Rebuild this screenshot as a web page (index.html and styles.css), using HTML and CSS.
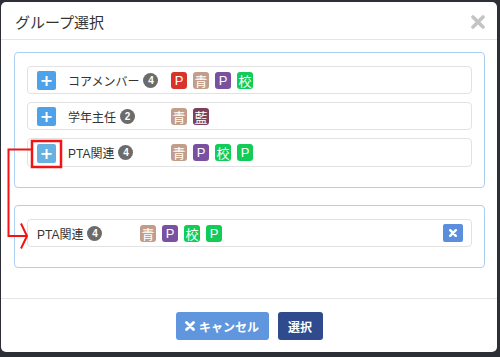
FILE: index.html
```html
<!DOCTYPE html>
<html lang="ja">
<head>
    <meta charset="UTF-8">
    <title>グループ選択</title>
    <link rel="stylesheet" href="styles.css">
</head>
<body>
    <div class="modal">
        <div class="modal-header">
            <h4 class="modal-title">グループ選択</h4>
            <span class="close">
                <svg width="14" height="14" viewBox="0 0 14 14"><path d="M2 2 L12 12 M12 2 L2 12" stroke="#c4c4c4" stroke-width="3.6" stroke-linecap="round"/></svg>
            </span>
        </div>

        <div class="modal-body">
            <!-- candidate groups -->
            <div class="panel">
                <div class="group-row">
                    <button class="btn-add">+</button>
                    <div class="group-name">コアメンバー<span class="badge">4</span></div>
                    <div class="tags">
                        <span class="tag tag-red">P</span>
                        <span class="tag tag-tan">青</span>
                        <span class="tag tag-purple">P</span>
                        <span class="tag tag-green">校</span>
                    </div>
                </div>
                <div class="group-row">
                    <button class="btn-add">+</button>
                    <div class="group-name">学年主任<span class="badge">2</span></div>
                    <div class="tags">
                        <span class="tag tag-tan">青</span>
                        <span class="tag tag-maroon">藍</span>
                    </div>
                </div>
                <div class="group-row">
                    <button class="btn-add hover">+</button>
                    <div class="group-name">PTA関連<span class="badge">4</span></div>
                    <div class="tags">
                        <span class="tag tag-tan">青</span>
                        <span class="tag tag-purple">P</span>
                        <span class="tag tag-green">校</span>
                        <span class="tag tag-green">P</span>
                    </div>
                </div>
            </div>

            <!-- selected groups -->
            <div class="panel">
                <div class="group-row selected">
                    <div class="group-name">PTA関連<span class="badge">4</span></div>
                    <div class="tags">
                        <span class="tag tag-tan">青</span>
                        <span class="tag tag-purple">P</span>
                        <span class="tag tag-green">校</span>
                        <span class="tag tag-green">P</span>
                    </div>
                    <button class="btn-remove">
                        <svg width="8" height="8" viewBox="0 0 8 8"><path d="M1.2 1.2 L6.8 6.8 M6.8 1.2 L1.2 6.8" stroke="#fff" stroke-width="2.4" stroke-linecap="round"/></svg>
                    </button>
                </div>
            </div>
        </div>

        <div class="modal-footer">
            <button class="btn btn-cancel">
                <svg width="10" height="10" viewBox="0 0 10 10"><path d="M1.5 1.5 L8.5 8.5 M8.5 1.5 L1.5 8.5" stroke="#fff" stroke-width="2.8" stroke-linecap="round"/></svg>
                キャンセル
            </button>
            <button class="btn btn-select">選択</button>
        </div>
    </div>

    <!-- annotation arrow -->
    <svg class="annotation" width="500" height="357" viewBox="0 0 500 357">
        <rect x="32" y="141" width="29" height="26" fill="none" stroke="#f21414" stroke-width="2.5"/>
        <path d="M31 149.5 H8.5 V236 H26" fill="none" stroke="#f21414" stroke-width="2"/>
        <path d="M21 223.5 L27 236 L21 248.5" fill="none" stroke="#f21414" stroke-width="2"/>
    </svg>
</body>
</html>
```

FILE: styles.css
```css
* {
    margin: 0;
    padding: 0;
    box-sizing: border-box;
}

body {
    background-color: #2c2f36;
    font-family: 'Liberation Sans', 'Noto Sans CJK JP', sans-serif;
    color: #333;
    width: 500px;
    height: 357px;
    overflow: hidden;
    position: relative;
}

.modal {
    margin: 2px 0 0 1px;
    width: 496px;
    height: 350px;
    background-color: #fff;
    border-radius: 5px;
    display: flex;
    flex-direction: column;
}

.modal-header {
    height: 38px;
    padding: 0 13px 0 14px;
    border-bottom: 1px solid #e5e5e5;
    display: flex;
    align-items: center;
    justify-content: space-between;
}

.modal-title {
    font-size: 15px;
    font-weight: normal;
    color: #333;
    margin-top: 2px;
}

.close {
    display: flex;
    margin-top: 2px;
    margin-right: -1px;
}

.modal-body {
    padding: 12px 12px 0 13px;
    flex: 1;
}

.panel {
    border: 1px solid #acd0f2;
    border-radius: 4px;
    padding: 13px 12px 20px 12px;
    display: flex;
    flex-direction: column;
    gap: 8px;
    margin-bottom: 17px;
}

.group-row {
    height: 28px;
    border: 1px solid #e2e2e2;
    border-radius: 4px;
    display: flex;
    align-items: center;
    padding: 0 8px 0 9px;
    font-size: 12px;
}

.panel .group-row:nth-child(3) {
    height: 29px;
}

.btn-add {
    width: 19px;
    height: 19px;
    border: none;
    border-radius: 2px;
    background-color: #4ea2ea;
    color: #fff;
    font-family: 'DejaVu Sans', sans-serif;
    font-size: 16px;
    font-weight: bold;
    line-height: 19px;
    margin-right: 12px;
    margin-top: 1px;
}

.btn-add.hover {
    background-color: #67b1e1;
}

.group-name {
    width: 103px;
    display: flex;
    align-items: center;
    color: #333;
}

.badge {
    display: inline-flex;
    align-items: center;
    justify-content: center;
    width: 15px;
    height: 15px;
    border-radius: 50%;
    background-color: #6b6b6b;
    color: #fff;
    font-size: 10px;
    font-weight: bold;
    margin-left: 4px;
}

.tags {
    display: flex;
    gap: 6px;
    flex: 1;
}

.tag {
    width: 16px;
    height: 17px;
    border-radius: 3px;
    color: #fff;
    font-size: 13px;
    display: flex;
    align-items: center;
    justify-content: center;
}

.tag-red { background-color: #d9342c; }
.tag-tan { background-color: #c29d8a; }
.tag-purple { background-color: #7a50a0; }
.tag-green { background-color: #12cc58; }
.tag-maroon { background-color: #7c3f5c; }

.btn-remove {
    width: 20px;
    height: 18px;
    border: none;
    border-radius: 2px;
    background-color: #5b8fdd;
    display: flex;
    align-items: center;
    justify-content: center;
}

.modal-footer {
    height: 54px;
    border-top: 1px solid #e5e5e5;
    display: flex;
    justify-content: center;
    align-items: flex-start;
    gap: 9px;
    padding-top: 13px;
}

.btn {
    height: 28px;
    border: none;
    border-radius: 3px;
    color: #fff;
    font-family: 'Liberation Sans', 'Noto Sans CJK JP', sans-serif;
    font-size: 12px;
    font-weight: bold;
    display: flex;
    align-items: center;
    justify-content: center;
    gap: 4px;
}

.btn-cancel {
    width: 93px;
    background-color: #5f96de;
}

.btn-select {
    width: 45px;
    background-color: #2f4b8d;
}

.annotation {
    position: absolute;
    top: 0;
    left: 0;
}
```
